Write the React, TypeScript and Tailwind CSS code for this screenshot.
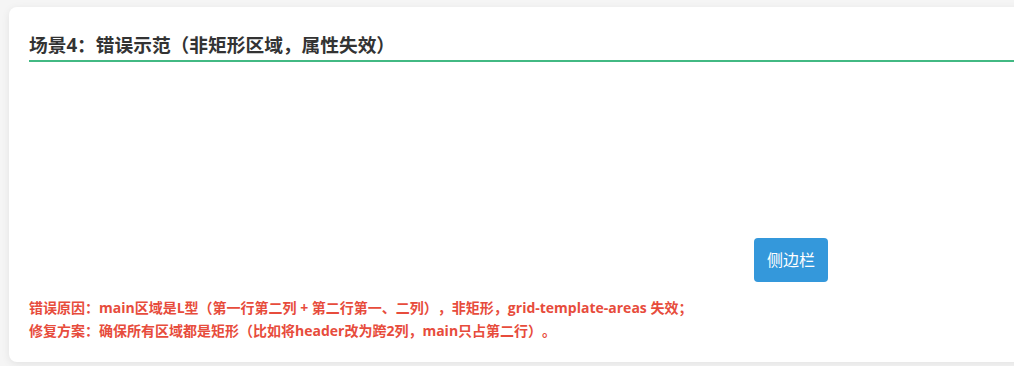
import React from 'react';

const App: React.FC = () => {
  return (
    <div
      className="min-h-[366px] w-[1014px] overflow-hidden bg-[#f5f5f5] pl-[9px] pt-[7px] [text-spacing-trim:space-all]"
      style={{ fontFamily: '"Open Sans", "Noto Sans CJK SC", sans-serif' }}
    >
      <div className="w-[1040px] rounded-lg bg-white px-[20px] pt-[24px] pb-[20px] shadow-[0_2px_8px_rgba(0,0,0,0.08)]">
        <h3 className="border-b-2 border-[#42b983] pb-[2px] text-[18.72px] leading-[27px] font-bold text-[#333]">
          场景4：错误示范（非矩形区域，属性失效）
        </h3>

        {/* grid demo: main is L-shaped so areas are ignored */}
        <div className="grid h-[220px] grid-cols-[725px_auto] grid-rows-[1fr_auto]">
          <div className="col-start-2 row-start-2">
            <div className="inline-block rounded bg-[#3498db] px-[13px] py-[10px] text-[16px] leading-[24px] text-white">
              侧边栏
            </div>
          </div>
        </div>

        <div className="mt-[14px] text-[14px] leading-[23px] font-bold text-[#e74c3c]">
          <p>错误原因：main区域是L型（第一行第二列 + 第二行第一、二列），非矩形，grid-template-areas 失效；</p>
          <p>修复方案：确保所有区域都是矩形（比如将header改为跨2列，main只占第二行）。</p>
        </div>
      </div>
    </div>
  );
};

export default App;
